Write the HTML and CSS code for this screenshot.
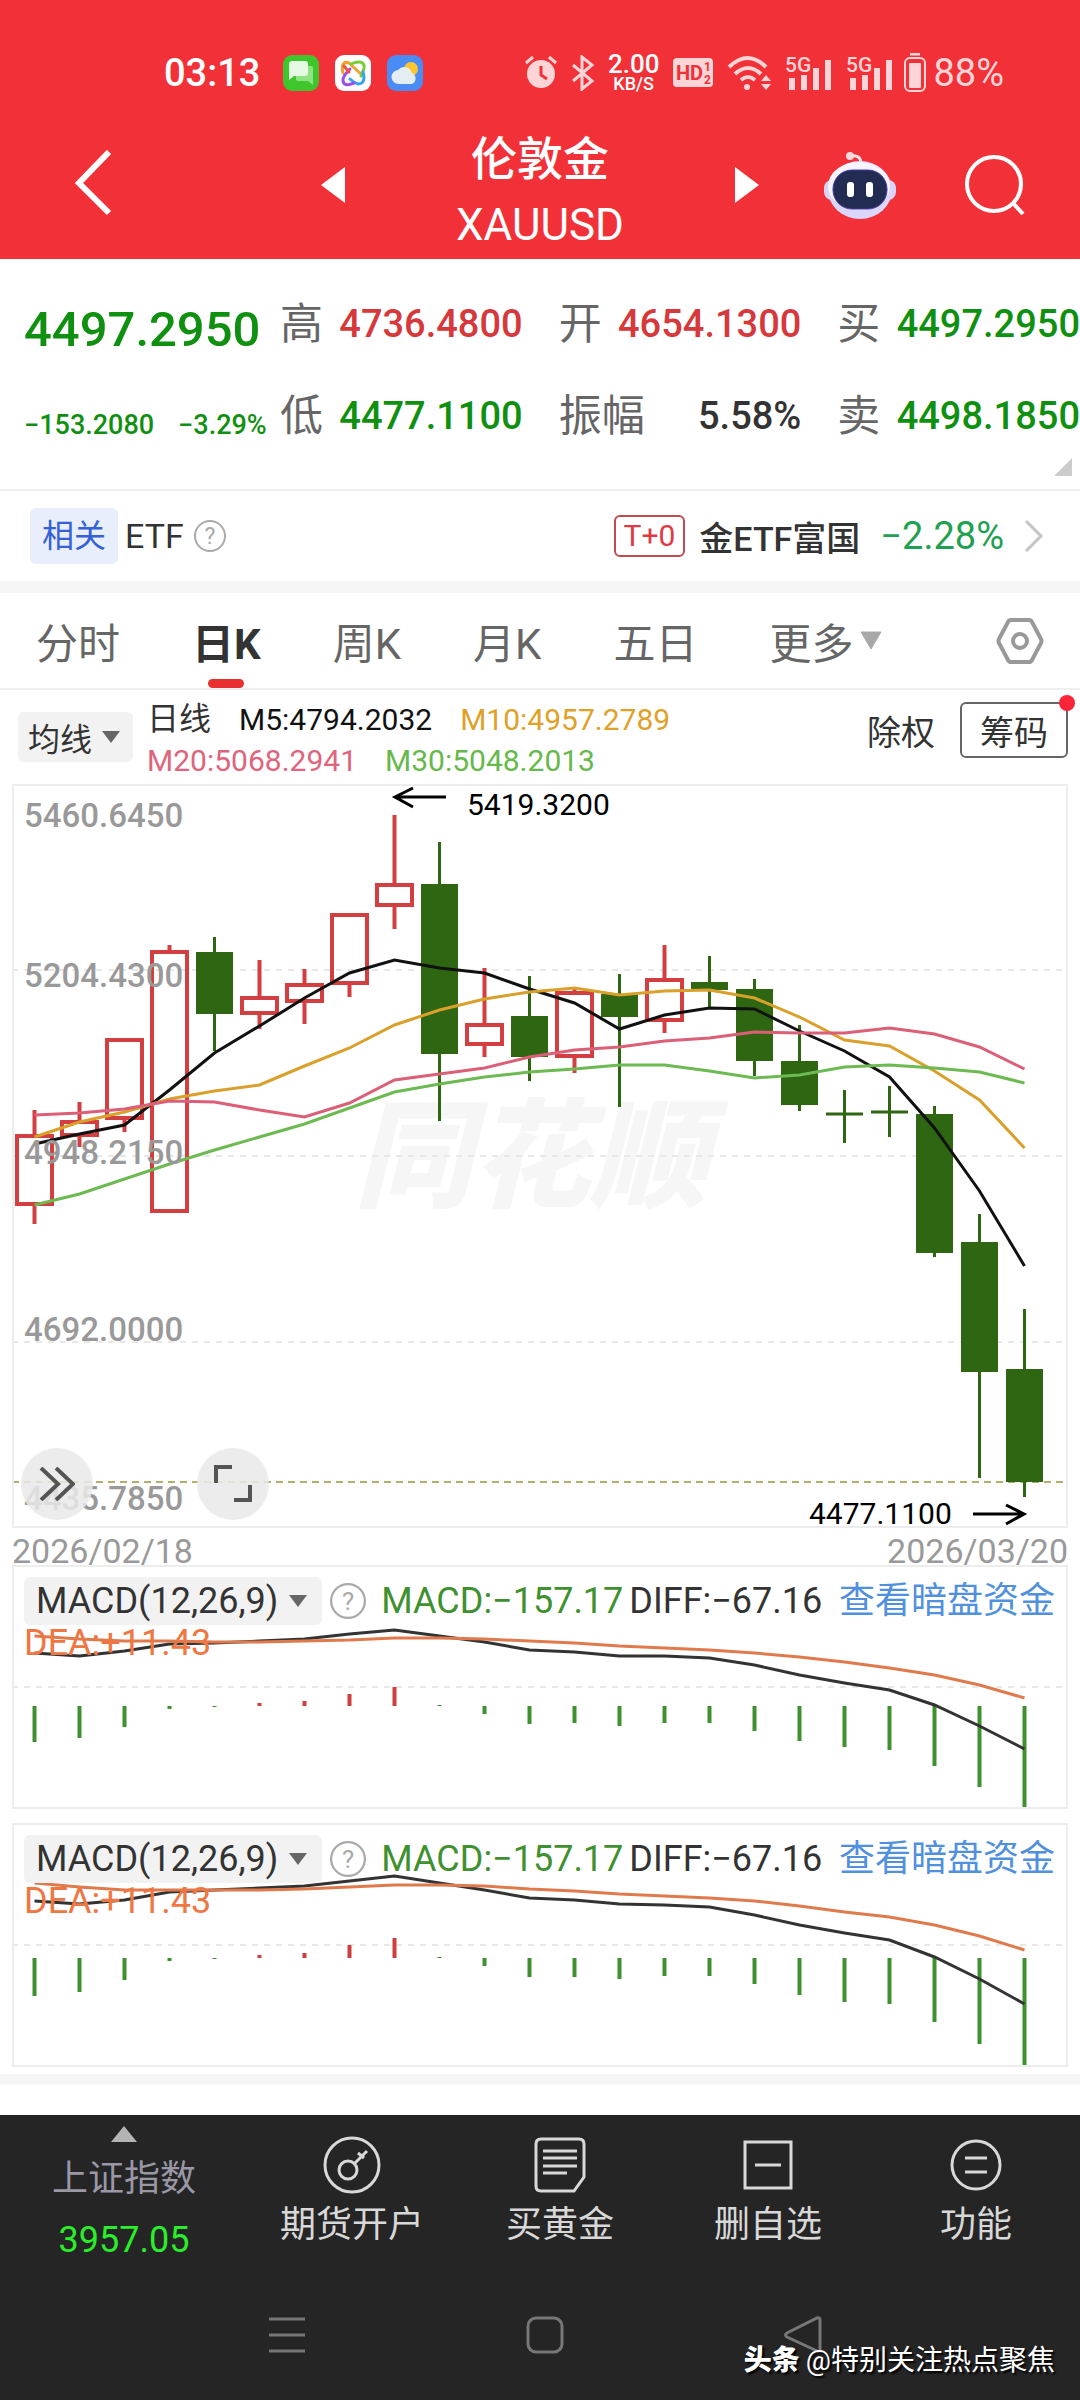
FILE: index.html
```html
<!DOCTYPE html>
<html lang="zh-CN">
<head>
    <meta charset="utf-8">
    <title>伦敦金 XAUUSD</title>
    <meta name="viewport" content="width=device-width, initial-scale=1.0">
    <link rel="stylesheet" href="styles.css">
</head>
<body>
    <header class="top">
        <div class="status">
            <span class="time">03:13</span>
            <div class="apps">
                <svg width="36" height="36" viewBox="0 0 36 36">
                    <rect width="36" height="36" rx="9" fill="#3fc62d"/>
                    <path d="M13 13q0-2 2-2h13q2 0 2 2v17l-5-4H15q-2 0-2-2z" fill="#8fe383"/>
                    <path d="M6 9q0-3 3-3h13q3 0 3 3v9q0 3-3 3H11l-5 4z" fill="#e6f9e2"/>
                </svg>
                <svg width="36" height="36" viewBox="0 0 36 36" fill="none" stroke-width="3" stroke-linecap="round">
                    <rect width="36" height="36" rx="9" fill="#fff"/>
                    <path d="M8 18C6 9 9 6 14 8l13 12" stroke="#f0a22c"/>
                    <path d="M16 9c8-4 14-2 13 4-1 4-2 6-3 8" stroke="#7ccb3c"/>
                    <path d="M28 17c2 7 1 12-5 12-4-1-6-3-8-5" stroke="#33a6ee"/>
                    <path d="M19 28c-7 3-11 2-11-3 0-3 3-7 7-11" stroke="#9a50e8"/>
                    <path d="M9 11l5 6" stroke="#ee5544"/>
                </svg>
                <svg width="36" height="36" viewBox="0 0 36 36">
                    <rect width="36" height="36" rx="9" fill="#4a8cf4"/>
                    <circle cx="24" cy="14" r="7" fill="#fbc52d"/>
                    <path d="M12 29a7 7 0 0 1-1-14 8 8 0 0 1 14 3 6 6 0 0 1 0 11z" fill="#e3edf2"/>
                </svg>
            </div>
            <div class="signals">
                <svg width="34" height="36" viewBox="0 0 34 36">
                    <circle cx="17" cy="19" r="14" fill="#fdd5d7"/>
                    <path d="M2 8l7-6M32 8l-7-6" stroke="#fdd5d7" stroke-width="3"/>
                    <path d="M17 11v9l6 4" fill="none" stroke="#f23038" stroke-width="3"/>
                </svg>
                <svg width="22" height="36" viewBox="0 0 22 36">
                    <path d="M1 10l19 16-10 8V2l10 8L1 26" fill="none" stroke="#fdd5d7" stroke-width="3"/>
                </svg>
                <span class="speed"><b>2.00</b><i>KB/S</i></span>
                <svg width="40" height="30" viewBox="0 0 40 30" class="hd">
                    <rect width="40" height="29" rx="4" fill="#fdd5d7"/>
                    <text x="3" y="22" font-size="20">HD</text>
                    <text x="31" y="13" font-size="12">1</text>
                    <text x="31" y="26" font-size="12">2</text>
                </svg>
                <svg width="44" height="36" viewBox="0 0 44 36">
                    <g fill="none" stroke="#fdd5d7" stroke-width="4">
                        <path d="M2 12Q21-6 39 12"/>
                        <path d="M8 19Q21 7 34 19"/>
                        <path d="M14 25Q21 19 28 25"/>
                    </g>
                    <circle cx="20" cy="32" r="3" fill="#fdd5d7"/>
                    <path d="M34 26l5-6 5 6zM34 29l5 6 5-6z" fill="#fdd5d7"/>
                </svg>
                <svg width="47" height="36" viewBox="0 0 47 36" class="cell">
                    <text x="0" y="17" font-size="21">5G</text>
                    <path d="M4 23h6v12H4zM16 20h6v15h-6zM28 13h6v22h-6zM40 5h6v30h-6z"/>
                </svg>
                <svg width="47" height="36" viewBox="0 0 47 36" class="cell">
                    <text x="0" y="17" font-size="21">5G</text>
                    <path d="M4 23h6v12H4zM16 20h6v15h-6zM28 13h6v22h-6zM40 5h6v30h-6z"/>
                </svg>
                <span class="power">
                    <svg width="22" height="40" viewBox="0 0 22 40">
                        <path d="M6 1h10" stroke="#fdd5d7" stroke-width="3"/>
                        <rect x="1" y="5" width="20" height="33" rx="5" fill="none" stroke="#fdd5d7" stroke-width="2"/>
                        <rect x="5" y="10" width="12" height="25" rx="1" fill="#fdd5d7"/>
                    </svg>
                    88%
                </span>
            </div>
        </div>
        <nav class="titlebar">
            <div class="side">
                <button class="back" aria-label="返回">
                    <svg width="38" height="66" viewBox="0 0 38 66"><path d="M34 2L4 33l30 30" fill="none" stroke="#fff" stroke-width="6"/></svg>
                </button>
            </div>
            <div class="switcher">
                <button aria-label="上一个">
                    <svg width="24" height="36" viewBox="0 0 24 36"><path d="M24 0v36L0 18z" fill="#fff"/></svg>
                </button>
                <h1>伦敦金<span>XAUUSD</span></h1>
                <button aria-label="下一个">
                    <svg width="24" height="36" viewBox="0 0 24 36"><path d="M0 0v36l24-18z" fill="#fff"/></svg>
                </button>
            </div>
            <div class="side right">
                <button aria-label="助手">
                    <svg width="72" height="68" viewBox="0 0 72 68">
                        <path d="M26 5q11-2 11 8" fill="none" stroke="#ffe2e6" stroke-width="3"/>
                        <circle cx="26" cy="5" r="4" fill="#ffd9dd"/>
                        <rect x="0" y="29" width="72" height="20" rx="8" fill="#d9d4f7"/>
                        <ellipse cx="36" cy="39" rx="32" ry="29" fill="#dcd6fa"/>
                        <ellipse cx="35" cy="35" rx="31" ry="24" fill="#f8f4ff"/>
                        <rect x="9" y="19" width="54" height="39" rx="19" fill="#222b52" stroke="#4a3ba8" stroke-width="1"/>
                        <rect x="23" y="31" width="7" height="15" rx="3" fill="#fff"/>
                        <rect x="42" y="31" width="7" height="15" rx="3" fill="#fff"/>
                    </svg>
                </button>
                <button aria-label="搜索">
                    <svg width="60" height="62" viewBox="0 0 60 62">
                        <circle cx="29" cy="30" r="27" fill="none" stroke="#fff" stroke-width="4"/>
                        <path d="M48 49l10 11" stroke="#fff" stroke-width="4"/>
                    </svg>
                </button>
            </div>
        </nav>
    </header>

    <section class="quote">
        <div class="summary">
            <strong>4497.2950</strong>
            <div class="change"><span>−153.2080</span><span>−3.29%</span></div>
        </div>
        <div class="stats">
            <div><span>高</span><b class="up">4736.4800</b></div>
            <div><span>开</span><b class="up">4654.1300</b></div>
            <div><span>买</span><b class="down">4497.2950</b></div>
            <div><span>低</span><b class="down">4477.1100</b></div>
            <div><span>振幅</span><b>5.58%</b></div>
            <div><span>卖</span><b class="down">4498.1850</b></div>
        </div>
        <svg class="corner" width="18" height="18" viewBox="0 0 18 18"><path d="M18 0v18H0z" fill="#ccc"/></svg>
    </section>

    <a class="related" href="#">
        <span class="tag">相关</span>
        <span class="etf">ETF</span>
        <svg width="32" height="32" viewBox="0 0 32 32" class="help">
            <circle cx="16" cy="16" r="15"/>
            <text x="16" y="24">?</text>
        </svg>
        <span class="t0">T+0</span>
        <span class="name">金ETF富国</span>
        <span class="pct">−2.28%</span>
        <svg width="20" height="34" viewBox="0 0 20 34"><path d="M2 2l15 15L2 32" fill="none" stroke="#c4c4c4" stroke-width="3"/></svg>
    </a>

    <div class="tabs">
        <button>分时</button>
        <button class="active">日K</button>
        <button>周K</button>
        <button>月K</button>
        <button>五日</button>
        <button class="more">更多<svg width="22" height="19" viewBox="0 0 22 19"><path d="M1 1h20L11 18z" fill="#a8a8a8" stroke="#a8a8a8" stroke-linejoin="round"/></svg></button>
        <button class="gear" aria-label="设置">
            <svg width="48" height="46" viewBox="0 0 48 46" fill="none" stroke="#999">
                <path d="M15 2h18q2 0 3 2l9 17q1 2 0 4l-9 17q-1 2-3 2H15q-2 0-3-2L3 25q-1-2 0-4l9-17q1-2 3-2z" stroke-width="4"/>
                <circle cx="24" cy="23" r="7" stroke-width="4"/>
            </svg>
        </button>
    </div>

    <div class="ma-bar">
        <button class="pick">均线<svg width="18" height="12" viewBox="0 0 18 12"><path d="M0 0h18L9 12z" fill="#666"/></svg></button>
        <div class="ma">
            <p><span class="kind">日线</span><span class="m5">M5:4794.2032</span><span class="m10">M10:4957.2789</span></p>
            <p><span class="m20">M20:5068.2941</span><span class="m30">M30:5048.2013</span></p>
        </div>
        <button class="plain">除权</button>
        <button class="chip">筹码</button>
    </div>

    <section class="kline">
        <!-- one candle every 45 units, first at 34.5 -->
        <svg viewBox="12 784 1056 744">
            <text class="mark" x="354" y="1198">同花顺</text>
            <path class="grid" d="M12 970H1068M12 1156H1068M12 1342H1068"/>
            <path class="now" d="M12 1482H1068"/>
            <g class="red">
                <path d="M34.5 1110v25M34.5 1205v19M79.5 1102v20M79.5 1136v11M124.5 1119v13M169.5 945v7M259.5 960v38M259.5 1014v15M304.5 969v15M304.5 1002v22M349.5 984v13M394.5 815v69M394.5 906v23M484.5 968v57M484.5 1046v11M574.5 989v4M574.5 1057v16M664.5 945v34M664.5 1021v12"/>
                <rect x="17" y="1136" width="35" height="68"/>
                <rect x="62" y="1122" width="35" height="13"/>
                <rect x="107" y="1040" width="35" height="78"/>
                <rect x="152" y="952" width="35" height="259"/>
                <rect x="242" y="998" width="35" height="15"/>
                <rect x="287" y="985" width="35" height="16"/>
                <rect x="332" y="915" width="35" height="68"/>
                <rect x="377" y="885" width="35" height="20"/>
                <rect x="467" y="1025" width="35" height="19"/>
                <rect x="557" y="993" width="35" height="63"/>
                <rect x="647" y="980" width="35" height="40"/>
            </g>
            <g class="green">
                <path d="M214.5 937v114M439.5 842v279M529.5 976v105M619.5 974v133M709.5 956v52M754.5 979v97M799.5 1025v86M844.5 1090v53M889.5 1086v51M934.5 1106v151M979.5 1214v264M1024.5 1309v188M826 1114H863M871 1112H908"/>
                <rect x="196" y="952" width="37" height="62"/>
                <rect x="421" y="884" width="37" height="170"/>
                <rect x="511" y="1016" width="37" height="41"/>
                <rect x="601" y="994" width="37" height="23"/>
                <rect x="691" y="982" width="37" height="8"/>
                <rect x="736" y="989" width="37" height="72"/>
                <rect x="781" y="1061" width="37" height="44"/>
                <rect x="916" y="1114" width="37" height="139"/>
                <rect x="961" y="1242" width="37" height="130"/>
                <rect x="1006" y="1369" width="37" height="113"/>
            </g>
            <polyline stroke="#111" points="34.5,1144 79.5,1134 124.5,1125 169.5,1090 214.5,1053 259.5,1026 304.5,998 349.5,973 394.5,960 439.5,968 484.5,973 529.5,989 574.5,1003 619.5,1029 664.5,1015 709.5,1008 754.5,1009 799.5,1031 844.5,1051 889.5,1077 934.5,1128 979.5,1191 1024.5,1266"/>
            <polyline stroke="#d9a02c" points="34.5,1137 79.5,1122 124.5,1112 169.5,1099 214.5,1091 259.5,1085 304.5,1066 349.5,1048 394.5,1025 439.5,1010 484.5,999 529.5,992 574.5,988 619.5,995 664.5,991 709.5,990 754.5,998 799.5,1017 844.5,1040 889.5,1046 934.5,1071 979.5,1100 1024.5,1148"/>
            <polyline stroke="#dc5f78" points="34.5,1115 79.5,1113 124.5,1109 169.5,1101 214.5,1102 259.5,1110 304.5,1117 349.5,1103 394.5,1080 439.5,1074 484.5,1068 529.5,1057 574.5,1050 619.5,1047 664.5,1041 709.5,1038 754.5,1032 799.5,1033 844.5,1033 889.5,1028 934.5,1034 979.5,1047 1024.5,1069"/>
            <polyline stroke="#6cba51" points="34.5,1205 79.5,1194 124.5,1179 169.5,1164 214.5,1150 259.5,1137 304.5,1124 349.5,1108 394.5,1092 439.5,1084 484.5,1077 529.5,1072 574.5,1069 619.5,1065 664.5,1065 709.5,1071 754.5,1078 799.5,1075 844.5,1067 889.5,1065 934.5,1068 979.5,1072 1024.5,1083"/>
            <g class="axis">
                <text x="24" y="827">5460.6450</text>
                <text x="24" y="987">5204.4300</text>
                <text x="24" y="1164">4948.2150</text>
                <text x="24" y="1341">4692.0000</text>
                <text x="24" y="1510">4435.7850</text>
            </g>
            <g class="peak">
                <path d="M446 797H395M413 788L395 797 413 807M973 1514H1023M1006 1505L1024 1514 1006 1524"/>
                <text x="467" y="815">5419.3200</text>
                <text x="809" y="1524">4477.1100</text>
            </g>
        </svg>
        <div class="tools">
            <button aria-label="前进"><svg width="36" height="34" viewBox="0 0 36 34"><path d="M2 1l17 16L2 33M17 1l17 16-17 16"/></svg></button>
            <button aria-label="全屏"><svg width="38" height="38" viewBox="0 0 38 38"><path d="M2 18V2h16M36 20v15H20"/></svg></button>
        </div>
    </section>
    <div class="dates"><span>2026/02/18</span><span>2026/03/20</span></div>

    <section class="macd">
        <svg viewBox="12 1565 1056 244">
            <path class="grid" d="M12 1687H1068"/>
            <path class="hist-down" d="M34.5 1706V1742M79.5 1706V1738M124.5 1706V1727M169.5 1706V1709M214.5 1706V1707M439.5 1705V1706M484.5 1706V1714M529.5 1706V1724M574.5 1706V1723M619.5 1706V1726M664.5 1706V1723M709.5 1706V1723M754.5 1706V1731M799.5 1706V1741M844.5 1706V1747M889.5 1706V1750M934.5 1706V1766M979.5 1706V1787M1024.5 1706V1809"/>
            <path class="hist-up" d="M259.5 1706V1703M304.5 1706V1701M349.5 1706V1694M394.5 1706V1687"/>
            <polyline stroke="#333" points="34.5,1653 79.5,1656 124.5,1651 169.5,1644 214.5,1643 259.5,1641 304.5,1639 349.5,1634 394.5,1630 439.5,1636 484.5,1642 529.5,1650 574.5,1652 619.5,1656 664.5,1656 709.5,1658 754.5,1665 799.5,1675 844.5,1683 889.5,1690 934.5,1705 979.5,1726 1024.5,1749"/>
            <polyline stroke="#e07a4c" points="34.5,1636 79.5,1639 124.5,1641 169.5,1641 214.5,1642 259.5,1642 304.5,1641 349.5,1640 394.5,1638 439.5,1638 484.5,1639 529.5,1641 574.5,1643 619.5,1646 664.5,1648 709.5,1650 754.5,1653 799.5,1657 844.5,1662 889.5,1668 934.5,1675 979.5,1685 1024.5,1698"/>
        </svg>
        <div class="macd-head">
            <button class="pick">MACD(12,26,9)<svg width="18" height="12" viewBox="0 0 18 12"><path d="M0 0h18L9 12z" fill="#666"/></svg></button>
            <svg width="36" height="36" viewBox="0 0 32 32" class="help"><circle cx="16" cy="16" r="15"/><text x="16" y="24">?</text></svg>
            <span class="hist">MACD:−157.17</span>
            <span class="diff">DIFF:−67.16</span>
            <a href="#">查看暗盘资金</a>
            <span class="dea">DEA:+11.43</span>
        </div>
    </section>

    <section class="macd">
        <svg viewBox="12 1823 1056 244">
            <path class="grid" d="M12 1945H1068"/>
            <path class="hist-down" d="M34.5 1958V1996M79.5 1958V1992M124.5 1958V1980M169.5 1958V1961M214.5 1958V1959M439.5 1957V1958M484.5 1958V1966M529.5 1958V1977M574.5 1958V1977M619.5 1958V1979M664.5 1958V1976M709.5 1958V1976M754.5 1958V1984M799.5 1958V1995M844.5 1958V2002M889.5 1958V2004M934.5 1958V2022M979.5 1958V2044M1024.5 1958V2067"/>
            <path class="hist-up" d="M259.5 1958V1955M304.5 1958V1953M349.5 1958V1945M394.5 1958V1938"/>
            <polyline stroke="#333" points="34.5,1901 79.5,1904 124.5,1900 169.5,1892 214.5,1890 259.5,1888 304.5,1886 349.5,1881 394.5,1876 439.5,1883 484.5,1890 529.5,1898 574.5,1900 619.5,1904 664.5,1905 709.5,1907 754.5,1915 799.5,1925 844.5,1933 889.5,1940 934.5,1957 979.5,1979 1024.5,2004"/>
            <polyline stroke="#e07a4c" points="34.5,1883 79.5,1887 124.5,1890 169.5,1890 214.5,1890 259.5,1890 304.5,1889 349.5,1887 394.5,1885 439.5,1885 484.5,1886 529.5,1889 574.5,1891 619.5,1894 664.5,1896 709.5,1898 754.5,1901 799.5,1906 844.5,1912 889.5,1917 934.5,1925 979.5,1936 1024.5,1950"/>
        </svg>
        <div class="macd-head">
            <button class="pick">MACD(12,26,9)<svg width="18" height="12" viewBox="0 0 18 12"><path d="M0 0h18L9 12z" fill="#666"/></svg></button>
            <svg width="36" height="36" viewBox="0 0 32 32" class="help"><circle cx="16" cy="16" r="15"/><text x="16" y="24">?</text></svg>
            <span class="hist">MACD:−157.17</span>
            <span class="diff">DIFF:−67.16</span>
            <a href="#">查看暗盘资金</a>
            <span class="dea">DEA:+11.43</span>
        </div>
    </section>
    <div class="band"></div>

    <footer class="bottom">
        <div class="actions">
            <button class="index">
                <svg width="26" height="16" viewBox="0 0 26 16"><path d="M13 0l13 16H0z" fill="#b4b4b4"/></svg>
                <span>上证指数</span>
                <b>3957.05</b>
            </button>
            <button>
                <svg width="58" height="58" viewBox="0 0 58 58">
                    <circle cx="29" cy="29" r="27"/>
                    <circle cx="25" cy="34" r="9"/>
                    <path d="M32 27l12-12M35 17l6 5"/>
                </svg>
                <span>期货开户</span>
            </button>
            <button>
                <svg width="58" height="58" viewBox="0 0 58 58">
                    <path d="M10 3h38q5 0 5 5v33L43 55H10q-5 0-5-5V8q0-5 5-5zM12 15h34M12 22h34M12 30h34M12 37h24"/>
                </svg>
                <span>买黄金</span>
            </button>
            <button>
                <svg width="58" height="58" viewBox="0 0 58 58">
                    <path d="M6 6h46v46H6zM16 29h26"/>
                </svg>
                <span>删自选</span>
            </button>
            <button>
                <svg width="58" height="58" viewBox="0 0 58 58">
                    <circle cx="29" cy="29" r="24"/>
                    <path d="M18 22h22M18 36h22"/>
                </svg>
                <span>功能</span>
            </button>
        </div>
        <div class="system">
            <button aria-label="最近任务"><svg width="38" height="38" viewBox="0 0 38 38"><path d="M1 3h36M1 19h36M1 35h36"/></svg></button>
            <button aria-label="主屏幕"><svg width="38" height="38" viewBox="0 0 38 38"><rect x="2" y="2" width="34" height="34" rx="8"/></svg></button>
            <button aria-label="后退"><svg width="38" height="38" viewBox="0 0 38 38"><path d="M33 2q3-1 3 2v29q0 4-3 2L3 21q-3-2 0-4z"/></svg></button>
        </div>
        <p class="credit"><b>头条</b>@特别关注热点聚焦</p>
    </footer>
</body>
</html>
```
FILE: styles.css
```css
* {
    box-sizing: border-box;
}
body {
    margin: 0;
    background: #fff;
    color: #333;
    font-family: Roboto, "Noto Sans CJK SC", sans-serif;
    min-height: 100vh;
    display: flex;
    flex-direction: column;
}
button {
    border: none;
    background: none;
    padding: 0;
    margin: 0;
    color: inherit;
    font: inherit;
}
a {
    text-decoration: none;
    color: inherit;
}
p, h1 {
    margin: 0;
    font-weight: 400;
}
svg {
    display: block;
    flex-shrink: 0;
}
.top {
    background: #f23038;
    color: #fff;
}
.status {
    display: flex;
    align-items: center;
    padding: 36px 76px 0 164px;
    height: 110px;
}
.time {
    font-size: 38px;
    font-weight: 500;
}
.apps {
    display: flex;
    gap: 16px;
    margin-left: 23px;
}
.signals {
    display: flex;
    align-items: center;
    gap: 14px;
    margin-left: auto;
}
.speed {
    text-align: center;
    font-weight: 500;
}
.speed b {
    display: block;
    font-size: 26px;
    line-height: 22px;
    font-weight: 500;
}
.speed i {
    display: block;
    font-size: 18px;
    line-height: 18px;
    font-style: normal;
}
.hd {
    fill: #f23038;
    font-weight: 700;
}
.cell {
    fill: #fdd5d7;
    font-weight: 500;
}
.power {
    display: flex;
    align-items: center;
    gap: 7px;
    margin-left: -3px;
    font-size: 38px;
    color: #fdd5d7;
}
.titlebar {
    display: flex;
    align-items: center;
    height: 149px;
    padding: 0 55px;
}
.side {
    flex: 1;
}
.back {
    margin-left: 20px;
}
.side.right {
    display: flex;
    justify-content: flex-end;
    align-items: center;
    gap: 69px;
}
.switcher {
    display: flex;
    align-items: center;
    justify-content: space-between;
    width: 438px;
}
.switcher h1 {
    align-self: flex-end;
    padding-top: 14px;
    font-size: 46px;
    line-height: 66px;
    font-weight: 500;
    text-align: center;
}
.switcher h1 span {
    display: block;
    font-size: 44px;
    font-weight: 400;
}
.quote {
    position: relative;
    display: flex;
    height: 232px;
    border-bottom: 2px solid #efefef;
}
.summary {
    width: 256px;
    padding-top: 47px;
    color: #109010;
    white-space: nowrap;
}
.summary strong {
    display: block;
    margin-left: 24px;
    font-size: 49px;
    line-height: 48px;
    font-weight: 500;
}
.change {
    display: flex;
    gap: 24px;
    margin: 56px 0 0 24px;
    font-size: 27px;
    line-height: 30px;
    font-weight: 500;
}
.stats {
    flex: 1;
    display: grid;
    grid-template-columns: repeat(3, 1fr);
    gap: 48px 36px;
    align-content: start;
    padding: 43px 0 0 24px;
}
.stats div {
    display: flex;
    justify-content: space-between;
    font-size: 43px;
    line-height: 44px;
    color: #666;
}
.stats b {
    font-size: 38px;
    font-weight: 500;
    color: #333;
}
.stats .up {
    color: #d6383b;
}
.stats .down {
    color: #109010;
}
.corner {
    position: absolute;
    right: 8px;
    bottom: 13px;
}
.related {
    display: flex;
    align-items: center;
    height: 90px;
    padding: 0 36px 0 30px;
    font-size: 34px;
}
.tag {
    padding: 0 12px;
    border-radius: 6px;
    background: #e8eefc;
    color: #3561d8;
    font-size: 32px;
    line-height: 56px;
}
.etf {
    margin: 0 10px 0 7px;
}
.help {
    fill: none;
    stroke: #aaa;
    stroke-width: 2;
}
.help text {
    fill: #aaa;
    stroke: none;
    font-size: 23px;
    text-anchor: middle;
}
.t0 {
    margin-left: auto;
    padding: 0 8px;
    border: 2px solid #c24a50;
    border-radius: 6px;
    color: #df3a44;
    font-size: 30px;
    line-height: 38px;
}
.name {
    margin: 0 20px 0 14px;
    font-weight: 500;
}
.pct {
    margin-right: 20px;
    font-size: 38px;
    color: #1fa052;
}
.tabs {
    display: flex;
    gap: 72px;
    height: 109px;
    padding: 0 36px;
    border-top: 12px solid #f5f5f5;
    border-bottom: 2px solid #efefef;
    font-size: 42px;
    color: #666;
}
.tabs .active {
    position: relative;
    color: #333;
    font-weight: 700;
}
.tabs .active::after {
    content: "";
    position: absolute;
    left: 50%;
    bottom: 0;
    width: 36px;
    height: 9px;
    margin-left: -18px;
    border-radius: 5px;
    background: #e83030;
}
.more {
    display: flex;
    align-items: center;
    gap: 7px;
}
.gear {
    margin-left: auto;
}
.ma-bar {
    display: flex;
    height: 94px;
    padding: 0 12px 0 18px;
    font-size: 34px;
}
.pick {
    display: flex;
    align-items: center;
    border-radius: 6px;
    background: #f2f2f2;
    color: #333;
}
.ma-bar .pick {
    gap: 10px;
    height: 50px;
    margin-top: 22px;
    padding: 0 13px 0 10px;
    font-size: 32px;
}
.ma {
    margin: 9px auto 0 14px;
    font-size: 30px;
    line-height: 41px;
    font-weight: 500;
    white-space: nowrap;
}
.ma p {
    display: flex;
    gap: 28px;
}
.kind {
    font-size: 32px;
}
.m5 {
    color: #111;
}
.m10 {
    color: #dfa128;
}
.m20 {
    color: #e0647d;
}
.m30 {
    color: #66b94a;
}
.plain, .chip {
    height: 56px;
    margin-top: 12px;
}
.chip {
    position: relative;
    margin-left: 25px;
    padding: 0 18px;
    border: 2px solid #666;
    border-radius: 6px;
}
.chip::after {
    content: "";
    position: absolute;
    top: -9px;
    right: -9px;
    width: 16px;
    height: 16px;
    border-radius: 50%;
    background: #fb2438;
}
.kline, .macd {
    display: grid;
    margin: 0 12px;
    outline: 2px solid #ededed;
    outline-offset: -2px;
}
.kline > *, .macd > * {
    grid-area: 1 / 1;
}
.kline > svg, .macd > svg {
    width: 100%;
    overflow: visible;
}
polyline {
    fill: none;
    stroke-width: 3;
}
.grid {
    stroke: #e8e8e8;
    stroke-width: 2;
    stroke-dasharray: 6 6;
}
.now {
    stroke: #b3ad6e;
    stroke-width: 2;
    stroke-dasharray: 7 5;
}
.red {
    fill: none;
    stroke: #d33f40;
    stroke-width: 4;
}
.green {
    fill: #2f6612;
}
.green path {
    stroke: #2f6612;
    stroke-width: 3;
}
.mark {
    fill: #f6f6f6;
    font-size: 118px;
    font-weight: 900;
    font-style: italic;
}
.axis {
    fill: #999;
    font-size: 33px;
    font-weight: 500;
}
.peak {
    fill: #000;
    font-size: 30px;
}
.peak path {
    fill: none;
    stroke: #000;
    stroke-width: 3;
}
.tools {
    align-self: end;
    display: flex;
    gap: 104px;
    padding: 0 0 8px 9px;
}
.tools button {
    display: flex;
    align-items: center;
    justify-content: center;
    width: 72px;
    height: 72px;
    border-radius: 50%;
    background: rgba(233, 233, 233, .85);
}
.tools path {
    fill: none;
    stroke: #555;
    stroke-width: 4;
}
.dates {
    display: flex;
    justify-content: space-between;
    padding: 9px 12px 0;
    font-size: 34px;
    line-height: 28px;
    color: #999;
}
.macd + .macd {
    margin-top: 14px;
}
.hist-down {
    stroke: #3f9130;
    stroke-width: 4;
}
.hist-up {
    stroke: #cf3f40;
    stroke-width: 4;
}
.macd-head {
    display: flex;
    flex-wrap: wrap;
    align-content: start;
    align-items: center;
    padding: 11px 13px 0 12px;
    font-size: 36px;
}
.macd-head .pick {
    gap: 11px;
    height: 48px;
    padding: 0 15px 0 12px;
}
.macd-head .help {
    margin: 0 15px 0 8px;
}
.hist {
    color: #3f9130;
}
.diff {
    margin-left: 6px;
}
.macd-head a {
    margin-left: auto;
    font-size: 36px;
    line-height: 50px;
    color: #5090dc;
}
.dea {
    width: 100%;
    line-height: 34px;
    color: #ee7743;
}
.band {
    height: 11px;
    margin: 7px 0 30px;
    background: #f5f5f5;
}
.bottom {
    position: relative;
    flex: 1;
    background: #252525;
    color: #d8d8d8;
}
.actions {
    display: grid;
    grid-template-columns: 248px repeat(4, 1fr);
    font-size: 36px;
    line-height: 48px;
}
.actions button {
    display: flex;
    flex-direction: column;
    align-items: center;
    gap: 7px;
    padding-top: 21px;
}
.actions svg {
    fill: none;
    stroke: #d8d8d8;
    stroke-width: 3;
}
.actions .index {
    gap: 13px;
    padding-top: 11px;
    color: #9a98a5;
}
.index svg {
    stroke: none;
}
.index b {
    font-weight: 400;
    color: #2bee2b;
}
.system {
    display: flex;
    justify-content: center;
    gap: 220px;
    padding: 52px 0 0 10px;
}
.system svg {
    fill: none;
    stroke: #777;
    stroke-width: 3;
}
.credit {
    position: absolute;
    right: 25px;
    bottom: 20px;
    font-size: 28px;
    line-height: 38px;
    color: #fff;
    text-shadow: 2px 2px 2px #000;
}
.credit b {
    margin-right: 6px;
    font-weight: 900;
}
```
